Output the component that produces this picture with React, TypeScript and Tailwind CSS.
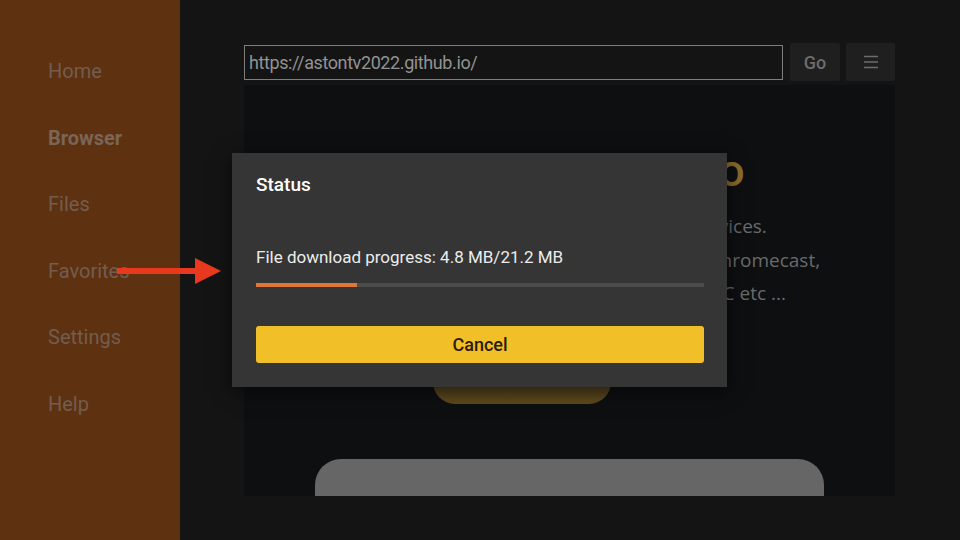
import React from "react";

const menu = ["Home", "Browser", "Files", "Favorites", "Settings", "Help"];

function Sidebar() {
    return (
        <div className="w-[180px] shrink-0 bg-[#5e3111] pt-[57px] pl-[48px]">
            {menu.map((item) => (
                <div
                    key={item}
                    className={
                        item === "Browser"
                            ? "h-[66.5px] text-[20px] leading-[28px] font-bold text-[#7a6556]"
                            : "h-[66.5px] text-[20px] leading-[28px] text-[#735d4e]"
                    }
                >
                    {item}
                </div>
            ))}
        </div>
    );
}

function StatusDialog() {
    const done = 4.8;
    const total = 21.2;
    return (
        <div className="absolute left-[232px] top-[153px] w-[495px] h-[234px] bg-[#353535] shadow-[0_4px_18px_rgba(0,0,0,0.6)] pt-[20px] pl-[24px] pr-[23px]">
            <div className="text-[19px] leading-[24px] font-medium text-white">Status</div>
            <div className="mt-[49px] text-[17px] leading-[22px] text-[#ececec]">
                File download progress: {done} MB/{total} MB
            </div>
            <div className="mt-[15px] h-[4px] bg-[#4c4c4c]">
                <div className="h-full bg-[#e0773a]" style={{ width: `${(done / total) * 100}%` }} />
            </div>
            <button className="mt-[39px] w-full h-[37px] rounded-[3px] bg-[#f1bf27] text-[18px] font-medium text-[#2a1c08]">
                Cancel
            </button>
        </div>
    );
}

function Arrow() {
    return (
        <svg className="absolute left-[117px] top-[257px]" width="104" height="28" viewBox="0 0 104 28">
            <line x1="0" y1="14" x2="82" y2="14" stroke="#e8381d" strokeWidth="6" />
            <polygon points="78,1 104,14 78,27" fill="#e8381d" />
        </svg>
    );
}

export default function App() {
    return (
        <div className="relative w-[960px] h-[540px] overflow-hidden flex font-['Roboto',sans-serif] bg-[#141414]">
            <Sidebar />
            <div className="flex-1 flex flex-col pt-[43px] pl-[64px] pr-[65px]">
                <div className="flex items-center h-[38px]">
                    <div className="flex-1 h-[35px] border border-[#7e7e7e] flex items-center pl-[4px] text-[18px] tracking-[-0.4px] text-[#929292]">
                        https://astontv2022.github.io/
                    </div>
                    <button className="ml-[7px] w-[50px] h-[38px] rounded-[2px] bg-[#1f1f1f] text-[18px] font-medium text-[#6d6d6d]">
                        Go
                    </button>
                    <button className="ml-[6px] w-[49px] h-[38px] rounded-[2px] bg-[#1f1f1f] flex items-center justify-center">
                        <svg width="16" height="16" viewBox="0 0 16 16">
                            <path d="M1 2.5h14M1 8h14M1 13.5h14" stroke="#6d6d6d" strokeWidth="1.6" />
                        </svg>
                    </button>
                </div>
                <div className="mt-[4px] h-[411px] bg-[#0e0f11] overflow-hidden flex flex-col items-center pt-[56px] font-['Open_Sans',sans-serif]">
                    <div className="text-[44px] leading-[56px] font-semibold text-[#8a6c2c] whitespace-nowrap">
                        Aston Player Pro
                    </div>
                    <div className="mt-[13px] text-center text-[19px] leading-[33.5px] text-[#6a6a6a] whitespace-nowrap">
                        <div>Watch new films on all your Android devices.</div>
                        <div>Supports Firestick, Android TV Box, Phones, Chromecast,</div>
                        <div>Nvidia Shield, Mi Box, Smart TV, Tablets, PC etc ...</div>
                    </div>
                    <div className="mt-[43px] self-start ml-[189px] w-[178px] h-[50px] shrink-0 rounded-[22px] bg-gradient-to-b from-[#3e3115] to-[#5e4a1e]" />
                    <div className="mt-[55px] w-[509px] h-[80px] shrink-0 rounded-t-[26px] bg-[#666666]" />
                </div>
            </div>
            <StatusDialog />
            <Arrow />
        </div>
    );
}
